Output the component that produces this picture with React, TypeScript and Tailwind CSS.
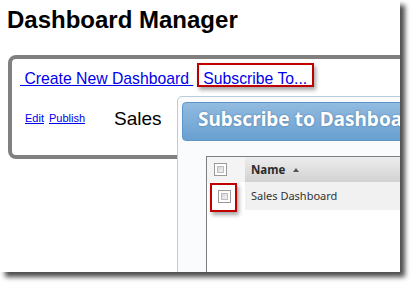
import React from 'react';

const Checkbox: React.FC = () => (
  <div className="w-[13px] h-[13px] border border-[#9a9a9a] bg-white p-[2px]">
    <div className="w-full h-full border border-[#bdbdbd] bg-gradient-to-br from-[#d6d6d6] to-[#f4f4f4]"></div>
  </div>
);

const App: React.FC = () => {
  return (
    <div className="w-[416px] h-[288px] bg-white">
      <div className="relative w-[400px] h-[272px] bg-white overflow-hidden shadow-[5px_5px_5px_rgba(0,0,0,0.7)] font-['Liberation_Sans',Arial,sans-serif]">
        <h1 className="pt-[8px] pl-[7px] text-[24px] leading-[24px] font-bold text-black">
          Dashboard Manager
        </h1>

        {/* main panel */}
        <div className="mt-[23px] ml-[8px] w-[440px] h-[104px] border-4 border-[#808080] rounded-[8px] bg-white">
          <div className="pt-[11px] pl-[8px] text-[15.75px] leading-[18px] whitespace-nowrap">
            <a href="#" className="text-[#0000ee] underline">&nbsp;Create New Dashboard&nbsp;</a>
            <a href="#" className="ml-[10px] text-[#0000ee] underline">Subscribe To...</a>
          </div>
          <div className="mt-[21px] pl-[13px] flex items-center h-[19px]">
            <a href="#" className="text-[11px] leading-none text-[#0000ee] underline">Edit</a>
            <a href="#" className="ml-[5px] text-[11px] leading-none text-[#0000ee] underline">Publish</a>
            <span className="ml-[29px] text-[19px] leading-none text-black">Sales</span>
          </div>
        </div>

        {/* subscribe dialog */}
        <div className="absolute left-[177px] top-[96px] w-[260px] h-[200px] border border-[#b7cddd] rounded-tl-[5px] bg-[#f9fbfc] pt-[5px] pl-[4px] font-['Noto_Sans',sans-serif]">
          <div className="h-[39px] rounded-[4px] border border-[#5d95c7] bg-gradient-to-b from-[#92bbe0] to-[#68a0d1] pl-[15px] pt-[7px]">
            <div className="text-[19px] leading-none font-bold text-white whitespace-nowrap [text-shadow:0_0_2px_rgba(30,70,120,0.55)]">
              Subscribe to Dashboards
            </div>
          </div>
          <div className="mt-[15px] ml-[24px] border-l border-t border-[#7f7f7f] bg-white h-[150px]">
            <div className="flex h-[25px]">
              <div className="w-[38px] bg-[#f4f4f4] flex items-center pl-[7px]">
                <Checkbox />
              </div>
              <div className="flex-1 flex items-center pl-[6px] bg-gradient-to-b from-[#ededed] to-[#d2d2d2] text-[11.5px] font-bold text-[#2b2b2b]">
                Name
                <span className="ml-[8px] w-0 h-0 border-l-[3px] border-r-[3px] border-b-[4px] border-l-transparent border-r-transparent border-b-[#555]"></span>
              </div>
            </div>
            <div className="flex h-[28px]">
              <div className="w-[38px] bg-white flex items-center pl-[11px]">
                <Checkbox />
              </div>
              <div className="flex-1 flex items-center pl-[6px] bg-[#f1f1f1] text-[11px] text-[#333]">
                Sales Dashboard
              </div>
            </div>
          </div>
        </div>

        {/* annotation boxes */}
        <div className="absolute left-[197px] top-[63px] w-[117px] h-[24px] border-2 border-[#c00000] shadow-[2px_3px_4px_rgba(0,0,0,0.35)]"></div>
        <div className="absolute left-[210px] top-[183px] w-[27px] h-[29px] border-2 border-[#c00000] shadow-[2px_3px_4px_rgba(0,0,0,0.35)]"></div>
      </div>
    </div>
  );
};

export default App;
